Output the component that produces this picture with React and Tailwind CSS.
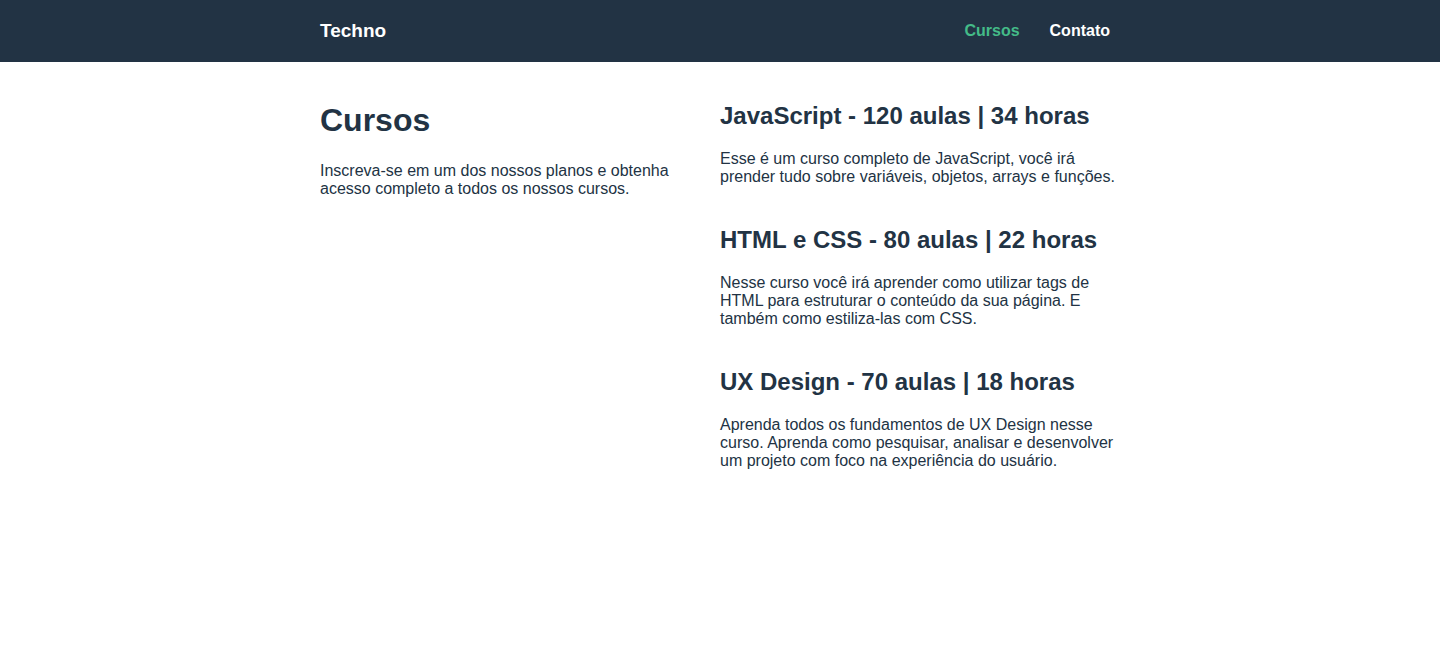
export default function App() {
  const cursos = [
    {
      t: "JavaScript - 120 aulas | 34 horas",
      d: "Esse é um curso completo de JavaScript, você irá prender tudo sobre variáveis, objetos, arrays e funções.",
    },
    {
      t: "HTML e CSS - 80 aulas | 22 horas",
      d: "Nesse curso você irá aprender como utilizar tags de HTML para estruturar o conteúdo da sua página. E também como estiliza-las com CSS.",
    },
    {
      t: "UX Design - 70 aulas | 18 horas",
      d: "Aprenda todos os fundamentos de UX Design nesse curso. Aprenda como pesquisar, analisar e desenvolver um projeto com foco na experiência do usuário.",
    },
  ];
  return (
    <div className="min-h-[650px] bg-white text-[#223344] font-['Liberation_Sans',Arial,sans-serif] leading-[1.15]">
      <header className="bg-[#223344] h-[62px]">
        <div className="w-[800px] mx-auto h-full flex items-center justify-between">
          <a className="text-white font-bold text-[19px]">Techno</a>
          <nav className="flex items-center gap-[30px] pr-[10px] text-[16px] font-bold">
            <a className="text-[#44bb88]">Cursos</a>
            <a className="text-white">Contato</a>
          </nav>
        </div>
      </header>
      <main className="w-[800px] mx-auto pt-[40px] grid grid-cols-2">
        <div className="pr-[30px]">
          <h1 className="text-[32px] font-bold">Cursos</h1>
          <p className="text-[16px] leading-[18px] mt-[23px]">
            Inscreva-se em um dos nossos planos e obtenha acesso completo a todos os nossos cursos.
          </p>
        </div>
        <div className="flex flex-col gap-[40px]">
          {cursos.map((c) => (
            <div key={c.t}>
              <h2 className="text-[24px] leading-[28px] font-bold">{c.t}</h2>
              <p className="text-[16px] leading-[18px] mt-[20px]">{c.d}</p>
            </div>
          ))}
        </div>
      </main>
    </div>
  );
}
